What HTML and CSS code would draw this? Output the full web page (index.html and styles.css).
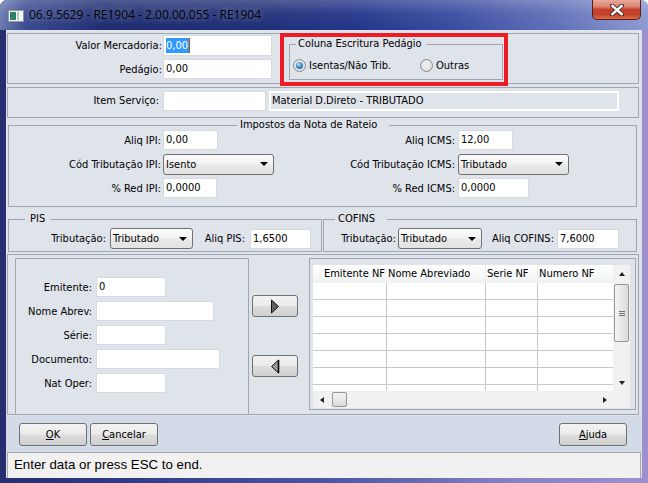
FILE: index.html
```html
<!DOCTYPE html>
<html>
<head>
<meta charset="utf-8">
<link rel="stylesheet" href="styles.css">
</head>
<body>
<div class="win">
  <div class="titlebar">
    <svg class="appicon" width="16" height="12" viewBox="0 0 16 12">
      <rect x="0.5" y="0.5" width="15" height="11" fill="#f4f6f6" stroke="#8a9a9a"/>
      <rect x="2" y="2" width="6" height="8" fill="#2f7d6c"/>
      <rect x="9" y="2" width="2" height="8" fill="#b9c6c4"/>
    </svg>
    <span class="title">06.9.5629 - RE1904 - 2.00.00.055 - RE1904</span>
    <div class="close">
      <svg width="14" height="12" viewBox="0 0 14 12">
        <path d="M2 1.5 L12 10.5 M12 1.5 L2 10.5" stroke="#4a2a28" stroke-width="4.2" stroke-linecap="square"/>
        <path d="M2.4 2 L11.6 10 M11.6 2 L2.4 10" stroke="#ffffff" stroke-width="2.4" stroke-linecap="square"/>
      </svg>
    </div>
  </div>
  <div class="client">
    <div class="main">
      <div class="panel toppanel">
        <div class="form2">
          <span class="lbl">Valor Mercadoria:</span><div class="input w109 h21"><span class="sel">0,00</span></div>
          <span class="lbl">Pedágio:</span><div class="input w109">0,00</div>
        </div>
        <fieldset class="gb escr">
          <legend>Coluna Escritura Pedágio</legend>
          <div class="radios">
            <div class="opt opt1"><span class="radio on"></span><span>Isentas/Não Trib.</span></div>
            <div class="opt"><span class="radio"></span><span>Outras</span></div>
          </div>
        </fieldset>
        <div class="redmark"></div>
      </div>

      <div class="panel itempanel">
        <span class="lbl item-lbl">Item Serviço:</span>
        <div class="input w103"></div>
        <div class="display">Material D.Direto - TRIBUTADO</div>
      </div>

      <fieldset class="gb impostos">
        <legend>Impostos da Nota de Rateio</legend>
        <div class="taxgrid">
          <span class="lbl">Aliq IPI:</span><div class="input w55">0,00</div>
          <span class="lbl">Aliq ICMS:</span><div class="input w55">12,00</div>
          <span class="lbl">Cód Tributação IPI:</span><div class="combo w111"><span>Isento</span></div>
          <span class="lbl">Cód Tributação ICMS:</span><div class="combo w111"><span>Tributado</span></div>
          <span class="lbl">% Red IPI:</span><div class="input w54">0,0000</div>
          <span class="lbl">% Red ICMS:</span><div class="input w71">0,0000</div>
        </div>
      </fieldset>

      <div class="pisrow">
        <fieldset class="gb pis">
          <legend>PIS</legend>
          <div class="taxline">
            <span class="lbl pl1">Tributação:</span><div class="combo w83"><span>Tributado</span></div>
            <span class="lbl pl2">Aliq PIS:</span><div class="input w61">1,6500</div>
          </div>
        </fieldset>
        <fieldset class="gb cofins">
          <legend>COFINS</legend>
          <div class="taxline">
            <span class="lbl cl1">Tributação:</span><div class="combo w84"><span>Tributado</span></div>
            <span class="lbl cl2">Aliq COFINS:</span><div class="input w62">7,6000</div>
          </div>
        </fieldset>
      </div>

      <div class="bottomarea">
        <div class="leftpanel">
          <div class="nfform">
            <span class="lbl">Emitente:</span><div class="input w70">0</div>
            <span class="lbl">Nome Abrev:</span><div class="input w118"></div>
            <span class="lbl">Série:</span><div class="input w70"></div>
            <span class="lbl">Documento:</span><div class="input w124"></div>
            <span class="lbl">Nat Oper:</span><div class="input w70"></div>
          </div>
        </div>
        <div class="movecol">
          <div class="btn arrowbtn">
            <svg width="10" height="15" viewBox="0 0 10 15"><polygon points="1.5,1 8.5,7.5 1.5,14" fill="#606060" stroke="#111" stroke-width="1"/></svg>
          </div>
          <div class="btn arrowbtn">
            <svg width="10" height="15" viewBox="0 0 10 15"><polygon points="8.5,1 1.5,7.5 8.5,14" fill="#9a9a9a" stroke="#111" stroke-width="1"/><line x1="8.5" y1="1" x2="8.5" y2="14" stroke="#000" stroke-width="1.6"/></svg>
          </div>
        </div>
        <div class="rightpanel">
          <div class="grid">
            <div class="gridtop">
              <div class="table">
                <div class="thead">
                  <div class="c c1 num">Emitente NF</div>
                  <div class="c c2">Nome Abreviado</div>
                  <div class="c c3">Serie NF</div>
                  <div class="c c4">Numero NF</div>
                </div>
                <div class="trow"><div class="c c1"></div><div class="c c2"></div><div class="c c3"></div><div class="c c4"></div></div>
                <div class="trow"><div class="c c1"></div><div class="c c2"></div><div class="c c3"></div><div class="c c4"></div></div>
                <div class="trow"><div class="c c1"></div><div class="c c2"></div><div class="c c3"></div><div class="c c4"></div></div>
                <div class="trow"><div class="c c1"></div><div class="c c2"></div><div class="c c3"></div><div class="c c4"></div></div>
                <div class="trow"><div class="c c1"></div><div class="c c2"></div><div class="c c3"></div><div class="c c4"></div></div>
                <div class="trow"><div class="c c1"></div><div class="c c2"></div><div class="c c3"></div><div class="c c4"></div></div>
                <div class="trow"><div class="c c1"></div><div class="c c2"></div><div class="c c3"></div><div class="c c4"></div></div>
              </div>
              <div class="vscroll">
                <div class="sbtn"><span class="tri up"></span></div>
                <div class="vtrack">
                  <div class="vthumb"><span class="grip"></span></div>
                </div>
                <div class="sbtn"><span class="tri down"></span></div>
              </div>
            </div>
            <div class="gridbot">
              <div class="hscroll">
                <div class="sbtn"><span class="tri left"></span></div>
                <div class="htrack"><div class="hthumb"></div></div>
                <div class="sbtn"><span class="tri right"></span></div>
              </div>
              <div class="corner"></div>
            </div>
          </div>
        </div>
      </div>
    </div>

    <div class="btnbar">
      <div class="btn pbtn"><u>O</u>K</div>
      <div class="btn pbtn"><u>C</u>ancelar</div>
      <div class="spacer"></div>
      <div class="btn pbtn"><u>A</u>juda</div>
    </div>
    <div class="status">Enter data or press ESC to end.</div>
  </div>
</div>
</body>
</html>
```

FILE: styles.css
```css
* { box-sizing: border-box; }
html, body { margin: 0; padding: 0; background: #ffffff; }
body {
  width: 648px; height: 483px; overflow: hidden;
  font-family: "DejaVu Sans Condensed", "DejaVu Sans", sans-serif;
  font-size: 11px; color: #000;
}
.win {
  width: 648px; height: 483px;
  display: flex; flex-direction: column;
  border-radius: 7px 7px 0 0; overflow: hidden;
  background: linear-gradient(90deg, #272e70 0%, #313c86 20%, #4b55a0 50%, #8a82c2 80%, #9d90cc 100%);
}
.titlebar {
  height: 30px; flex: none;
  display: flex; align-items: flex-start;
  background:
    linear-gradient(180deg, rgba(255,255,255,0.22) 0%, rgba(255,255,255,0.05) 45%, rgba(255,255,255,0) 100%),
    linear-gradient(90deg, #6a79ae 0%, #3a4a90 4%, #1f2d70 16%, #1f2f76 40%, #24358a 55%, #3a4ca0 70%, #6070b8 86%, #8d9ad2 100%);
}
.appicon { margin: 10px 0 0 8px; flex: none; }
.title {
  margin: 6px 0 0 5px;
  font-family: "Open Sans", "Noto Sans", sans-serif; font-size: 12px; line-height: 17px;
  color: #000;
  text-shadow: 0 0 7px rgba(225,230,245,0.55);
}
.close {
  margin: 0 7px 0 auto; width: 49px; height: 20px; flex: none;
  border: 1px solid #5a2018; border-top: none; border-radius: 0 0 5px 5px;
  background: linear-gradient(180deg, #e8a899 0%, #d9826f 35%, #c2422a 50%, #c0402a 75%, #dc6f47 100%);
  display: flex; align-items: center; justify-content: center;
}
.client {
  height: 448px; margin: 0 6px; flex: none;
  display: flex; flex-direction: column;
  background: #dfe3ea;
}
.main { height: 386px; flex: none; padding: 3px 0 0 1px; display: flex; flex-direction: column; }

.lbl { white-space: nowrap; text-align: right; }
.input {
  height: 20px; background: #fff; border: 1px solid #d6d9df;
  padding-left: 2px; line-height: 18px; white-space: nowrap;
}
.h21 { height: 21px; line-height: 19px; }
.sel { background: #3399ff; color: #fff; padding: 1px 1px 1px 0; border-right: 1px solid #b05010; }
.w54 { width: 54px; } .w55 { width: 55px; } .w61 { width: 61px; } .w62 { width: 62px; }
.w70 { width: 70px; } .w71 { width: 71px; } .w83 { width: 83px; } .w84 { width: 84px; }
.w103 { width: 103px; } .w109 { width: 109px; } .w111 { width: 111px; }
.w118 { width: 118px; } .w124 { width: 124px; }

.combo {
  height: 21px; border: 1px solid #707070; border-radius: 3px;
  background: linear-gradient(180deg, #fbfbfb 0%, #f3f3f3 45%, #e9e9e9 55%, #e2e2e2 100%);
  display: flex; align-items: center; justify-content: space-between;
  padding: 0 5px 0 2px; line-height: 19px;
}
.combo::after {
  content: ""; width: 0; height: 0;
  border-left: 4px solid transparent; border-right: 4px solid transparent; border-top: 4px solid #000;
}

.panel { border: 1px solid #9ea5b3; }
.toppanel {
  width: 632px; height: 51px; position: relative;
  display: flex; align-items: flex-start; padding-top: 1px;
}
.form2 {
  display: grid; grid-template-columns: 155px 109px; grid-template-rows: 21px 20px; row-gap: 3px;
  align-items: center;
}
.form2 .lbl { padding-right: 1px; }

.gb { margin: 0; padding: 0; border: 1px solid #9ea5b3; min-width: 0; }
.gb legend { line-height: 10px; padding: 0 4px 0 2px; }
.escr { width: 214px; margin: 4px 0 0 17px; padding: 10px 0 7px 3px; }
.escr legend { margin-left: 3px; padding: 0 4px 0 2px; }
.radios { display: flex; align-items: center; height: 13px; }
.opt { display: flex; align-items: center; gap: 3px; }
.opt1 { width: 127px; }
.radio {
  width: 13px; height: 13px; border-radius: 50%; border: 1px solid #8a8c8e;
  background: radial-gradient(circle at 50% 45%, #f4f4f4 0%, #e2e2e2 60%, #cfcfcf 100%);
  display: flex; align-items: center; justify-content: center; flex: none;
}
.radio.on::after {
  content: ""; width: 7px; height: 7px; border-radius: 50%;
  background: radial-gradient(circle at 40% 35%, #b8e4ff 0%, #3d8fd0 45%, #14507e 100%);
}
.redmark {
  position: absolute; left: 272px; top: -1px; width: 228px; height: 53px;
  border: 4px solid #ed1c24;
}

.itempanel {
  width: 632px; height: 31px; margin-top: 3px;
  display: flex; align-items: flex-start; padding-top: 3px;
}
.item-lbl { width: 155px; padding-right: 4px; line-height: 20px; }
.display {
  width: 350px; height: 20px; margin-left: 3px;
  border: 2px solid #ffffff; padding-left: 1px; line-height: 16px; white-space: nowrap;
}

.impostos { width: 629px; margin: 2px 0 0 1px; padding: 0 0 8px 0; }
.impostos legend { margin-left: 228px; padding: 0 12px 0 3px; }
.taxgrid {
  display: grid; grid-template-columns: 154px 111px 184px auto;
  grid-template-rows: 20px 22px 20px; row-gap: 3px; align-items: center; justify-items: start;
}
.taxgrid .lbl { justify-self: stretch; padding-right: 2px; }
.taxgrid .lbl:nth-child(4n+3) { padding-right: 3px; }

.pisrow { display: flex; margin: 7px 0 0 1px; gap: 1px; }
.pis, .cofins { width: 314px; padding: 4px 0 2px 0; }
.pis legend { margin-left: 16px; padding: 0 5px 0 5px; }
.cofins legend { margin-left: 11px; padding: 0 12px 0 3px; }
.taxline { display: flex; align-items: center; height: 21px; }
.taxline .lbl { flex: none; }
.pl1 { width: 101px; padding-right: 4px; }
.pl2 { width: 57px; padding-right: 5px; }
.cl1 { width: 74px; padding-right: 2px; }
.cl2 { width: 75px; padding-right: 3px; }

.bottomarea {
  width: 632px; height: 161px; margin-top: 2px;
  border: 1px solid #9ea5b3; display: flex; align-items: flex-start;
}
.leftpanel {
  width: 234px; align-self: stretch; margin: 3px 0 0 7px;
  border: 1px solid #9ea5b3; border-bottom: none; padding-top: 18px;
}
.nfform {
  display: grid; grid-template-columns: 77px auto; column-gap: 3px; row-gap: 4px;
  grid-template-rows: repeat(5, 20px); align-items: center; justify-items: start;
}
.nfform .lbl { justify-self: stretch; padding-right: 1px; }
.movecol {
  width: 60px; padding: 40px 0 0 3px;
  display: flex; flex-direction: column; gap: 38px;
}
.btn {
  border: 1px solid #707070; border-radius: 3px;
  background: linear-gradient(180deg, #f2f2f2 0%, #ebebeb 48%, #dddddd 52%, #cfcfcf 100%);
  display: flex; align-items: center; justify-content: center;
}
.arrowbtn { width: 46px; height: 22px; }
.rightpanel {
  width: 327px; height: 152px; margin: 3px 0 0 0;
  border: 1px solid #9ea5b3; padding: 6px 4px 1px 3px;
}
.grid { width: 317px; height: 143px; background: #fff; display: flex; flex-direction: column; }
.gridtop { display: flex; height: 126px; }
.table { width: 300px; height: 126px; overflow: hidden; }
.thead {
  display: flex; height: 18px;
  background: linear-gradient(180deg, #ffffff 0%, #f7f8f9 60%, #eef0f2 100%);
}
.thead .c { line-height: 17px; white-space: nowrap; border-right: 1px solid #e6e8eb; }
.c1 { width: 74px; } .c2 { width: 99px; } .c3 { width: 52px; } .c4 { width: 75px; }
.thead .c1 { text-align: right; padding-right: 1px; border-right-color: transparent; }
.thead .c2, .thead .c3, .thead .c4 { padding-left: 1px; }
.thead .c4 { border-right: none; }
.trow { display: flex; height: 17px; }
.trow .c { border-right: 1px solid #c9c9c9; border-bottom: 1px solid #c9c9c9; }
.trow .c4 { border-right: none; }

.vscroll { width: 17px; height: 126px; display: flex; flex-direction: column; background: #f1f1f1; }
.sbtn { width: 17px; height: 17px; display: flex; align-items: center; justify-content: center; flex: none; }
.vtrack { flex: 1; padding: 2px 1px; }
.vthumb {
  width: 15px; height: 58px;
  border: 1px solid #959595; border-radius: 2px;
  background: linear-gradient(90deg, #f3f3f3 0%, #e8e8e8 50%, #d9d9d9 100%);
  display: flex; align-items: center; justify-content: center;
}
.grip {
  width: 6px; height: 5px;
  border-top: 1px solid #6f6f6f; border-bottom: 1px solid #6f6f6f;
  background: linear-gradient(180deg, transparent 1px, #6f6f6f 1px, #6f6f6f 2px, transparent 2px);
}
.tri { width: 0; height: 0; }
.tri.up { border-left: 3.5px solid transparent; border-right: 3.5px solid transparent; border-bottom: 4px solid #222; }
.tri.down { border-left: 3.5px solid transparent; border-right: 3.5px solid transparent; border-top: 4px solid #222; }
.tri.left { border-top: 3.5px solid transparent; border-bottom: 3.5px solid transparent; border-right: 4px solid #222; }
.tri.right { border-top: 3.5px solid transparent; border-bottom: 3.5px solid transparent; border-left: 4px solid #222; }
.gridbot { display: flex; height: 17px; }
.hscroll { width: 300px; height: 17px; display: flex; background: #f1f1f1; }
.htrack { flex: 1; padding: 1px 2px; }
.hthumb {
  width: 15px; height: 15px;
  border: 1px solid #959595; border-radius: 2px;
  background: linear-gradient(180deg, #f3f3f3 0%, #e8e8e8 50%, #d9d9d9 100%);
}
.corner { width: 17px; height: 17px; background: #f1f1f1; }

.btnbar {
  height: 36px; flex: none; background: #d4dbe8;
  display: flex; align-items: flex-start; padding: 7px 15px 0 13px; gap: 3px;
}
.spacer { flex: 1; }
.pbtn { width: 68px; height: 23px; }
.status {
  height: 26px; flex: none; margin: 0 1px;
  background: #f1f1f1; border: 1px solid #a8a8a8; border-bottom: none;
  padding-left: 6px; line-height: 23px;
  font-family: "Liberation Sans", Arial, sans-serif; font-size: 13.3px; color: #000;
}
```
